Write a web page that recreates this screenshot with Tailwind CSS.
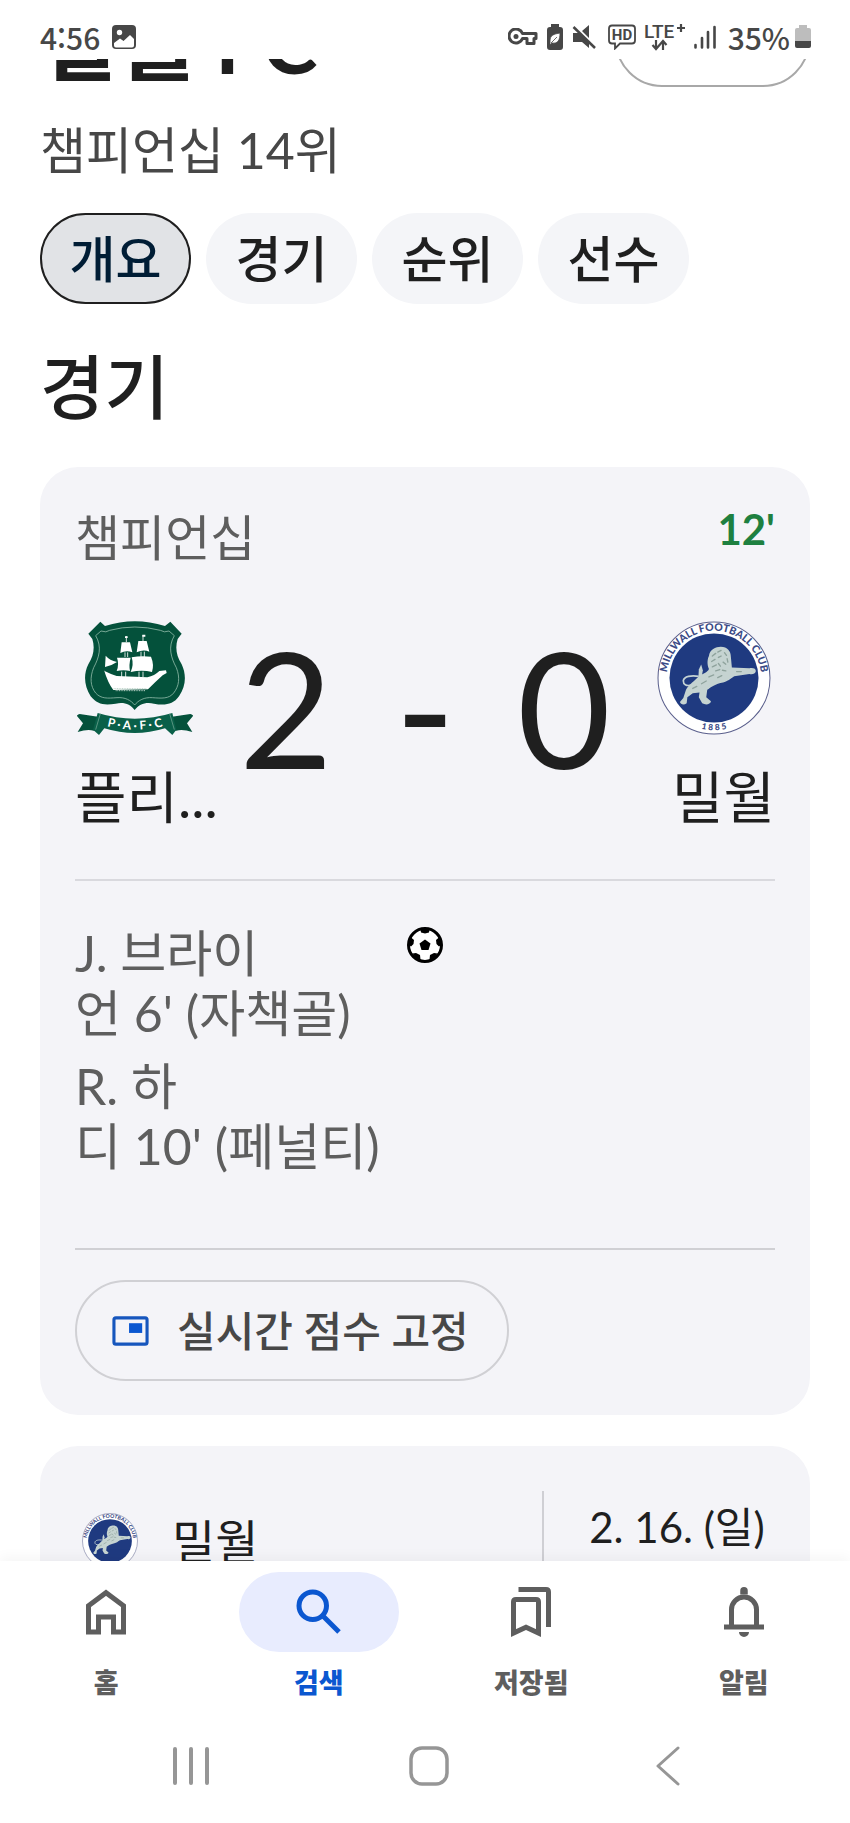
<!DOCTYPE html>
<html lang="ko">
<head>
    <meta charset="UTF-8">
    <meta name="viewport" content="width=device-width, initial-scale=1.0">
    <title>밀월 FC</title>
    <script src="https://cdn.jsdelivr.net/npm/@tailwindcss/browser@4"></script>
</head>
<body class="bg-white text-[#1f1f1f] font-['Lato','Noto_Sans_CJK_KR',sans-serif]">
    <!-- Shared crest -->
    <svg class="hidden" xmlns="http://www.w3.org/2000/svg">
        <symbol id="millwall" viewBox="26 36 338 338">
            <circle cx="195" cy="205" r="166" fill="#fff" stroke="#5a5f8c" stroke-width="3"/>
            <circle cx="195" cy="205" r="132" fill="#1f3a80"/>
            <path id="ring-top" d="M55 205a140 140 0 0 1 280 0" fill="none"/>
            <path id="ring-bottom" d="M135 348a156 156 0 0 0 120 0" fill="none"/>
            <text fill="#3b4a86" font-family="Lato, sans-serif" font-weight="900" font-size="31"><textPath href="#ring-top" startOffset="50%" text-anchor="middle">MILLWALL FOOTBALL CLUB</textPath></text>
            <text fill="#3b4a86" font-family="Lato, sans-serif" font-weight="900" font-size="25"><textPath href="#ring-bottom" startOffset="50%" text-anchor="middle">1 8 8 5</textPath></text>
            <path d="M128 226C112 230 104 224 104 213 106 200 128 196 150 200" fill="none" stroke="#c5d3d4" stroke-width="5"/>
            <path d="M149 200l1-20 7-15 5 18-4 20z" fill="#c5d3d4"/>
            <path d="M180 140C182 120 200 112 215 112 235 112 245 125 245 142L248 174 300 176C312 174 320 178 319 185 318 192 308 196 300 193L255 200C240 210 235 215 222 218 200 222 185 232 175 240L172 262 186 274C184 284 170 286 160 280L150 262 152 248 132 250 116 262 114 280C106 286 96 284 94 276L104 264 112 240C120 225 140 212 150 200 165 190 176 188 180 178 174 165 175 150 180 140z" fill="#c5d3d1"/>
            <path d="M190 140l10-8M188 156l10-6M190 172l12-6M206 128l10-5M208 144l8-4M226 130l6 8M234 148l2 10M222 158l8 6M208 162l6 8M200 184l12-4M220 182l10 2M180 202l14-6M206 204l12-6M158 222l14-8M132 236l12-6M262 186h14" fill="none" stroke="#8fa39d" stroke-width="4" stroke-linecap="round"/>
        </symbol>
    </svg>

    <div class="flex h-screen flex-col overflow-hidden">
        <!-- Status bar -->
        <header class="relative z-10 flex h-[59px] shrink-0 items-center justify-between bg-white pt-3.5 pr-[38px] pl-10 text-[30px] leading-8 font-medium text-[#474747] font-['Noto_Sans_CJK_KR',sans-serif]">
            <div class="flex items-center gap-3">
                <span>4:56</span>
                <svg class="h-6 w-6" viewBox="0 0 24 24"><rect width="24" height="24" rx="4" fill="#474747"/><circle cx="7.500" cy="7.500" r="2.700" fill="#fff"/><path d="M2 18l6-4.500 3.500 2.500 6.500-6 4 4v6.500a2 2 0 0 1-2 2H4a2 2 0 0 1-2-2z" fill="#fff"/></svg>
            </div>
            <div class="flex items-center gap-2">
                <svg class="h-[18px] w-[30px]" viewBox="0 0 30 18" fill="none" stroke="#474747"><path d="M14.500 5.500H28v5h-2v5h-7v-5h-4.500A7 7 0 1 1 14.500 5.500z" stroke-width="3" stroke-linejoin="round"/><circle cx="8" cy="8.500" r="2.500" fill="#474747" stroke="none"/></svg>
                <svg class="h-[26px] w-[18px]" viewBox="0 0 18 26"><path d="M5 0h8v3h1q3 0 3 3v17q0 3-3 3H4q-3 0-3-3V6q0-3 3-3h1z" fill="#474747"/><path d="M4 17c0-6 4-7 10-8 0 7-2 11-8 10l-2 2zM5 19l6-6" fill="#fff" stroke="#474747" stroke-width=".8"/></svg>
                <svg class="h-6 w-6" viewBox="0 0 24 24"><path d="M1 8h5l1-1 10 10v6l-7-6H1zM10 6l7-6v13z" fill="#474747"/><path d="M1.500 2L23 23" stroke="#474747" stroke-width="2.500"/></svg>
                <svg class="ml-1 h-[26px] w-7" viewBox="0 0 28 26" fill="none" stroke="#474747"><path d="M4 1.500h20q3 0 3 3v12q0 3-3 3H12l-5 5v-5H4q-3 0-3-3v-12q0-3 3-3z" stroke-width="1.800"/><text x="14" y="16" text-anchor="middle" font-family="Roboto, sans-serif" font-weight="700" font-size="15" fill="#474747" stroke="none">HD</text></svg>
                <svg class="h-[28px] w-[42px]" viewBox="0 0 42 28"><text x="0" y="15" font-family="Roboto, sans-serif" font-weight="500" font-size="19" fill="#474747">LTE</text><path d="M37 1v8M33 5h8M12 17v8M8.500 22l3.500 4 3.500-4M19 27v-8M15.500 22l3.500-4 3.500 4" fill="none" stroke="#474747" stroke-width="2.200"/></svg>
                <svg class="h-6 w-[22px]" viewBox="0 0 22 24" stroke="#474747" stroke-width="2.600" stroke-linecap="round"><path d="M1.500 20v2.500M8 13v9.500M14 7v15.500M20.500 2v20.500"/></svg>
                <div class="flex items-center gap-1 pl-1">
                    <span>35%</span>
                    <svg class="h-6 w-[18px]" viewBox="0 0 18 24"><path d="M5 0h8v3h2q2 0 2 2v12H1V5q0-2 2-2h2z" fill="#bdbdbd"/><path d="M1 16h16v5q0 2-2 2H3q-2 0-2-2z" fill="#474747"/></svg>
                </div>
            </div>
        </header>

        <main class="min-h-0 flex-1 overflow-hidden px-10">
            <!-- Team header, scrolled under the status bar -->
            <div class="-mt-[66px] flex h-[94px] items-center justify-between">
                <h1 class="pt-1 text-[84px] leading-[86px] font-bold">밀월 FC</h1>
                <button aria-label="팔로우" class="h-[94px] w-[195px] rounded-full border-2 border-[#a8a8a8]"></button>
            </div>
            <p class="mt-[33px] text-[50px] leading-[60px] text-[#474747]">챔피언십 14위</p>

            <nav class="mt-[33px] flex gap-[15px] text-[50px] leading-[60px] font-medium">
                <button class="h-[91px] w-[151px] rounded-full border-2 border-[#1f1f1f] bg-[#e1e3e6] text-[#001d35]">개요</button>
                <button class="h-[91px] w-[151px] rounded-full bg-[#f4f5f8]">경기</button>
                <button class="h-[91px] w-[151px] rounded-full bg-[#f4f5f8]">순위</button>
                <button class="h-[91px] w-[151px] rounded-full bg-[#f4f5f8]">선수</button>
            </nav>

            <h2 class="mt-[43px] text-[70px] leading-[80px] font-medium">경기</h2>

            <!-- Live match -->
            <section class="mt-10 rounded-[38px] bg-[#f4f4f8] px-[35px] pt-10 pb-[34px]">
                <div class="flex items-start justify-between">
                    <p class="text-[49px] leading-[60px] text-[#5e5e5e]">챔피언십</p>
                    <p class="text-[42px] leading-11 font-bold text-[#1e8040]">12'</p>
                </div>
                <div class="mt-[52px] grid grid-cols-[1fr_417px_1fr] items-start">
                    <div class="min-w-0">
                        <svg class="h-[118px] w-[120px]" viewBox="18 24 360 354" role="img" aria-label="플리머스">
                            <path d="M94 32L108 45Q197 17 288 45L304 32 338 68 326 84C318 110 322 135 338 160 352 190 352 225 330 256 312 282 285 284 255 278 230 272 210 280 197 297 184 280 165 272 140 278 105 284 85 280 65 256 45 225 43 190 58 160 74 135 78 110 70 84L58 68z" fill="#04513b"/>
                            <path d="M96 60Q112 66 122 58 197 38 274 58 286 66 300 60L316 74C296 108 306 140 322 170 334 200 330 226 314 246 300 264 278 262 250 260 226 258 208 268 197 282 186 268 168 258 144 260 116 262 96 264 80 246 64 226 62 200 74 170 90 140 100 108 80 74z" fill="none" stroke="#8db8a6" stroke-width="2.500"/>
                            <g fill="#fff">
                                <path d="M158 94h25l7 30q-18-8-36 2zM208 90h25l8 32q-18-8-38 2zM188 139q28-6 58-2 10 24 3 46-30-8-64 0 10-22 3-44zM144 140h41q-6 22-2 40-20-4-40 0 8-20 1-40zM110 134q12 14 34 19-18 12-36 15z"/>
                                <path d="M105 179q20 10 38 16l92 4q22-5 36-19l20-2 2 8-12 7q-20 18-44 42l-104 2q-16-20-28-60z"/>
                                <path d="M168 76h8v5h-8zM220 71h9v6h-9z"/>
                            </g>
                            <path d="M172 75v18M222 72v18M168 124v14M176 124v14M216 122v16M226 122v16M158 182v16M170 182v16M210 182v16M222 182v16" stroke="#fff" stroke-width="2.500"/>
                            <path d="M134 233h100M140 239h88" stroke="#b9d0c6" stroke-width="3" stroke-dasharray="3 2"/>
                            <path d="M92 318l-60-9q-10 4-8 6l18 22-16 26q30-10 48-4l18-2zM304 318l60-9q10 4 8 6l-18 22 16 26q-30-10-48-4l-18-2z" fill="#04513b"/>
                            <path d="M86 306Q197 340 310 306L322 356 310 372 288 352Q197 380 106 352L90 372 72 356z" fill="#0a6049"/>
                            <path d="M94 308l-14 48M302 308l14 48" stroke="#7fae9b" stroke-width="2"/>
                            <path id="ribbon" d="M88 338q109 36 220 0" fill="none"/>
                            <text fill="#fff" font-family="Lato, sans-serif" font-weight="700" font-size="36"><textPath href="#ribbon" startOffset="50%" text-anchor="middle">P · A · F · C</textPath></text>
                        </svg>
                        <p class="mt-7 text-[56px] leading-16 whitespace-nowrap">플리...</p>
                    </div>
                    <div class="grid grid-cols-3 text-center text-[162px] leading-[176px]">
                        <span>2</span>
                        <span>-</span>
                        <span>0</span>
                    </div>
                    <div class="flex min-w-0 flex-col items-end">
                        <svg class="mt-0.5 mr-1 h-[114px] w-[114px]" role="img" aria-label="밀월"><use href="#millwall"/></svg>
                        <p class="mt-[30px] text-[56px] leading-16 whitespace-nowrap">밀월</p>
                    </div>
                </div>

                <hr class="mt-[50px] border-t-2 border-[#d9d9de]">
                <div class="mt-[42px] grid grid-cols-[1fr_36px_1fr] text-[50px] leading-[60px] text-[#5e5e5e]">
                    <ul class="flex flex-col gap-[13px] whitespace-nowrap">
                        <li>J. 브라이<br>언 6' (자책골)</li>
                        <li>R. 하<br>디 10' (페널티)</li>
                    </ul>
                    <svg class="mt-1 h-9 w-9" viewBox="0 0 36 36"><circle cx="18" cy="18" r="16.500" fill="#fff" stroke="#000" stroke-width="3"/><path d="M18 12.500l5.500 4-2 6.500h-7l-2-6.500zM13.500 2.500h9l-.500 3-4 1-4-1zM32.500 10l1.500 8-2 1.500-2.500-2.500-.5-4zM3.500 10L2 18l2 1.500L6.500 17l.5-4zM22.500 32.500l.5-4.500 4-2 3.500.5-3.500 5-3.500 2.500zM13.500 32.500L13 28l-4-2-3.500.5 3.500 5 3.500 2.500z" fill="#000"/></svg>
                </div>

                <hr class="mt-[72px] border-t-2 border-[#d0d0d4]">
                <button class="mt-[30px] flex h-[101px] items-center gap-7 rounded-full border-2 border-[#d0d0d4] pr-[38px] pl-[35px] text-[42px] leading-[50px] font-medium text-[#474747]">
                    <svg class="h-[30px] w-[37px]" viewBox="0 0 38 30"><rect x="2" y="1.500" width="34" height="27" rx="2" fill="none" stroke="#1656bd" stroke-width="3.200"/><path d="M17.500 7H31v10H17.500z" fill="#0b57d0"/></svg>
                    <span>실시간 점수 고정</span>
                </button>
            </section>

            <!-- Next match -->
            <section class="mt-[31px] flex items-start rounded-t-[38px] bg-[#f4f4f8] pt-[45px]">
                <div class="flex flex-1 items-center gap-[34px] pt-5 pl-[42px] text-[47px] leading-[60px]">
                    <svg class="h-14 w-14" role="img" aria-label="밀월"><use href="#millwall"/></svg>
                    <span>밀월</span>
                </div>
                <div class="h-[140px] w-[268px] border-l-2 border-[#cfcfd4] pt-1.5 text-center text-[42px] leading-[60px]">2. 16. (일)</div>
            </section>
        </main>

        <!-- App navigation -->
        <footer class="relative z-10 shrink-0 bg-white shadow-[0_-4px_12px_rgba(0,0,0,0.04)]">
            <nav class="grid grid-cols-4 pt-[11px] text-[27px] leading-9 font-black text-[#5e5e5e]">
                <a href="#" class="flex flex-col items-center gap-[13px]">
                    <span class="flex h-20 w-40 items-center justify-center rounded-full">
                        <svg class="h-[60px] w-[60px]" viewBox="0 0 24 24" fill="none" stroke="currentColor" stroke-width="2"><path d="M5 20V9.500l7-5.250 7 5.250V20h-4v-6H9v6z"/></svg>
                    </span>
                    <span>홈</span>
                </a>
                <a href="#" class="flex flex-col items-center gap-[13px] text-[#0b57d0]">
                    <span class="flex h-20 w-40 items-center justify-center rounded-full bg-[#e8ecfe]">
                        <svg class="h-[60px] w-[60px]" viewBox="0 0 24 24" fill="none" stroke="currentColor" stroke-width="2"><circle cx="9.500" cy="9.500" r="5.500"/><path d="M13.400 13.400l6.600 6.600"/></svg>
                    </span>
                    <span>검색</span>
                </a>
                <a href="#" class="flex flex-col items-center gap-[13px]">
                    <span class="flex h-20 w-40 items-center justify-center rounded-full">
                        <svg class="h-[60px] w-[60px]" viewBox="0 0 24 24" fill="none" stroke="currentColor" stroke-width="2"><path d="M5 20.400V8q0-1 1-1h8q1 0 1 1v12.400l-5-2.300zM7 3h11q1 0 1 1v14"/></svg>
                    </span>
                    <span>저장됨</span>
                </a>
                <a href="#" class="flex flex-col items-center gap-[13px]">
                    <span class="flex h-20 w-40 items-center justify-center rounded-full">
                        <svg class="h-[60px] w-[60px]" viewBox="0 0 24 24" fill="none" stroke="currentColor" stroke-width="2"><path d="M4 18h16M7 18v-7a5 5 0 0 1 10 0v7"/><path d="M10.500 5V3.500a1.500 1.500 0 0 1 3 0V5zM10 20h4a2 2 0 0 1-4 0z" fill="currentColor" stroke="none"/></svg>
                    </span>
                    <span>알림</span>
                </a>
            </nav>
            <!-- System buttons -->
            <div class="mt-2 grid h-[114px] grid-cols-3 place-items-center pr-16 pl-18">
                <button aria-label="최근 앱"><svg class="h-10 w-10" viewBox="0 0 40 40" fill="none" stroke="#969696" stroke-width="4" stroke-linecap="round"><path d="M4 3v34M20 3v34M36 3v34"/></svg></button>
                <button aria-label="홈"><svg class="h-10 w-10" viewBox="0 0 40 40" fill="none" stroke="#969696" stroke-width="3.500"><rect x="2" y="2" width="36" height="36" rx="11"/></svg></button>
                <button aria-label="뒤로"><svg class="h-10 w-10" viewBox="0 0 40 40" fill="none" stroke="#969696" stroke-width="3" stroke-linecap="round" stroke-linejoin="round"><path d="M31 2L11 20l20 18"/></svg></button>
            </div>
        </footer>
    </div>
</body>
</html>
